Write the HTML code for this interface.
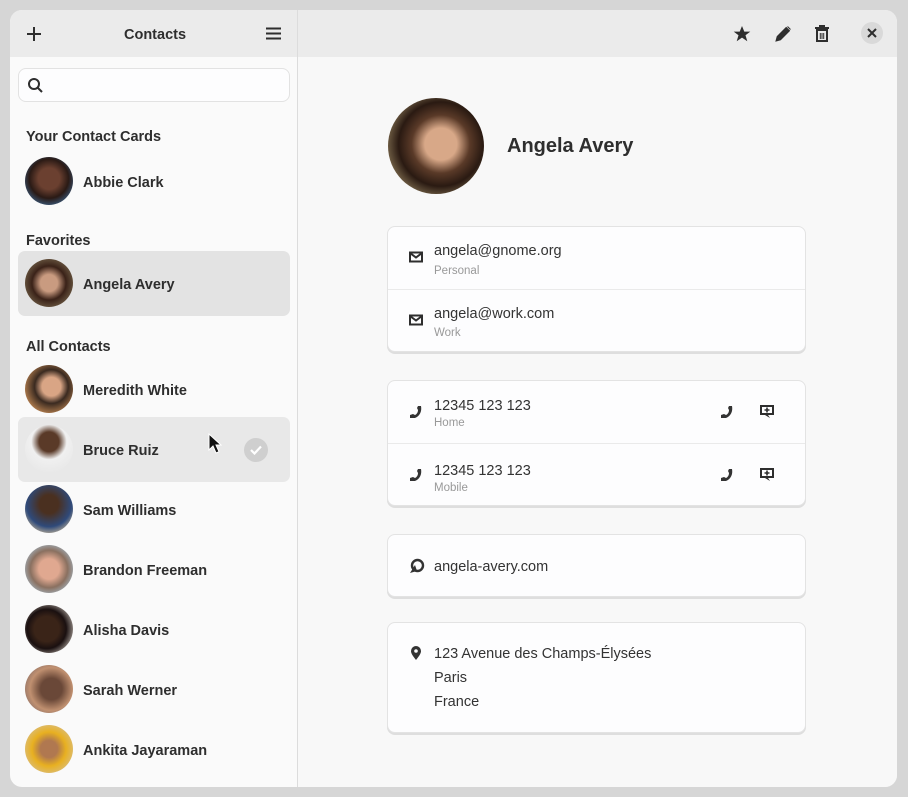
<!DOCTYPE html>
<html><head><style>
*{margin:0;padding:0;box-sizing:border-box}
body{width:908px;height:797px;background:#d6d6d6;font-family:"Liberation Sans",sans-serif;color:#2e2e2e;position:relative;overflow:hidden}
.win{position:absolute;left:10px;top:10px;width:887px;height:777px;border-radius:12px;background:#fafafa;overflow:hidden}
.hd{position:absolute;top:0;height:47px;background:#ebebeb}
.a{position:absolute}
.av{position:absolute;width:48px;height:48px;border-radius:50%;left:15px}
.nm{position:absolute;left:73px;font-weight:bold;font-size:14.5px;transform:translateY(-50%);margin-top:2px}
.sec{position:absolute;left:16px;font-weight:bold;font-size:14.5px;transform:translateY(-50%);margin-top:2px}
.card{position:absolute;left:377px;width:419px;background:#fdfdfe;border:1px solid #e3e3e3;border-radius:8px;box-shadow:0 2px 0 #dedede}
.t{position:absolute;left:46px;font-size:14.5px;color:#333;margin-top:2px}
.s{position:absolute;left:46px;font-size:11.5px;color:#999;margin-top:1px}
.ic{position:absolute;left:21px}
</style></head><body>
<div class="win">
<div class="hd" style="left:0;width:287px"></div>
<div class="hd" style="left:288px;width:599px"></div>
<div class="a" style="left:287px;top:0;width:1px;height:777px;background:#dcdcdc"></div>
<div class="a" style="left:288px;top:47px;width:599px;height:730px;background:#f8f8f8"></div>
<svg class="a" style="left:16px;top:16px" width="16" height="16"><path d="M8 1v14M1 8h14" stroke="#2e2e2e" stroke-width="2"/></svg>
<div class="a" style="left:114px;top:17px;font-weight:bold;font-size:14.5px">Contacts</div>
<svg class="a" style="left:256px;top:17px" width="15" height="13"><path d="M0 1.5h15M0 6.5h15M0 11.5h15" stroke="#2e2e2e" stroke-width="2"/></svg>
<svg class="a" style="left:723px;top:15px" width="18" height="18"><path d="M9 1l2.3 5.6h6l-4.8 3.6 1.8 6L9 12.6 3.7 16.2l1.8-6L.7 6.6h6z" fill="#2e2e2e"/></svg>
<svg class="a" style="left:764px;top:15px" width="18" height="18"><path d="M2 16l1.2-4.5 9-9 3.3 3.3-9 9z M13.5 1.5l3 3" fill="#2e2e2e" stroke="#2e2e2e" stroke-width="1"/></svg>
<svg class="a" style="left:804px;top:14px" width="16" height="19"><path d="M5 1h6v2h4v2H1V3h4z" fill="#2e2e2e"/><rect x="3" y="6" width="10" height="11" fill="none" stroke="#2e2e2e" stroke-width="2"/><path d="M6.3 9v6M8 9v6M9.7 9v6" stroke="#2e2e2e" stroke-width="1"/></svg>
<div class="a" style="left:851px;top:12px;width:22px;height:22px;border-radius:50%;background:#d9d9d9"></div>
<svg class="a" style="left:857px;top:18px" width="10" height="10"><path d="M1 1l8 8M9 1l-8 8" stroke="#2e2e2e" stroke-width="2"/></svg>
<div class="a" style="left:8px;top:58px;width:272px;height:34px;border:1px solid #e2e2e2;border-radius:8px;background:#fdfdfe"></div>
<svg class="a" style="left:17px;top:67px" width="17" height="17"><circle cx="7" cy="7" r="5" stroke="#2e2e2e" stroke-width="2" fill="none"/><path d="M11 11l4 4" stroke="#2e2e2e" stroke-width="2"/></svg>
<div class="sec" style="top:125px">Your Contact Cards</div>
<div class="av" style="top:147px;background:radial-gradient(circle at 50% 45%,#6b4030 30%,#2a1a15 55%,#3a5c80 80%)"></div>
<div class="nm" style="top:171px">Abbie Clark</div>
<div class="sec" style="top:229px">Favorites</div>
<div class="a" style="left:8px;top:241px;width:272px;height:65px;border-radius:7px;background:#e3e3e3"></div>
<div class="av" style="top:249px;background:radial-gradient(circle at 50% 50%,#c99b80 25%,#3a2218 50%,#7a6a50 85%)"></div>
<div class="nm" style="top:273px">Angela Avery</div>
<div class="sec" style="top:335px">All Contacts</div>
<div class="av" style="top:355px;background:radial-gradient(circle at 55% 45%,#d9a585 25%,#3a2a20 45%,#c58a55 80%)"></div>
<div class="nm" style="top:379px">Meredith White</div>
<div class="a" style="left:8px;top:407px;width:272px;height:65px;border-radius:7px;background:#e8e8e8"></div>
<div class="av" style="top:415px;background:radial-gradient(circle at 50% 35%,#5a3a28 25%,#f0f0f0 45%,#e8e8e8 80%)"></div>
<div class="nm" style="top:439px">Bruce Ruiz</div>
<div class="a" style="left:234px;top:428px;width:24px;height:24px;border-radius:50%;background:#cfcfcf"></div>
<svg class="a" style="left:240px;top:435px" width="12" height="10"><path d="M1 5l3.5 3.5L11 1.5" stroke="#fff" stroke-width="2.2" fill="none"/></svg>
<svg class="a" style="left:198px;top:423px" width="14" height="22"><path d="M1 1v16l4-4 3 7 3-1.3-3-6.7h5z" fill="#111" stroke="#fff" stroke-width="1"/></svg>
<div class="av" style="top:475px;background:radial-gradient(circle at 50% 40%,#4a3020 25%,#2f4a7a 60%,#c8b89a 85%)"></div>
<div class="nm" style="top:499px">Sam Williams</div>
<div class="av" style="top:535px;background:radial-gradient(circle at 50% 50%,#e0a890 30%,#8a7060 55%,#a8c0d0 85%)"></div>
<div class="nm" style="top:559px">Brandon Freeman</div>
<div class="av" style="top:595px;background:radial-gradient(circle at 45% 50%,#3a2418 35%,#1a1010 55%,#c0b8b0 85%)"></div>
<div class="nm" style="top:619px">Alisha Davis</div>
<div class="av" style="top:655px;background:radial-gradient(circle at 55% 50%,#6a4838 30%,#c09070 60%,#8a7068 85%)"></div>
<div class="nm" style="top:679px">Sarah Werner</div>
<div class="av" style="top:715px;background:radial-gradient(circle at 50% 50%,#b07850 25%,#e8b020 50%,#d8c090 85%)"></div>
<div class="nm" style="top:739px">Ankita Jayaraman</div>
<div class="a" style="left:378px;top:88px;width:96px;height:96px;border-radius:50%;background:radial-gradient(circle at 55% 48%,#d8a888 22%,#5a3a28 40%,#2a1a12 58%,#8a7858 80%)"></div>
<div class="a" style="left:497px;top:125px;font-weight:bold;font-size:20px">Angela Avery</div>
<div class="card" style="top:216px;height:126px">
<div class="a" style="left:0;top:62px;width:100%;height:1px;background:#eaeaea"></div>
<svg class="ic" style="top:24px" width="14" height="12"><rect x="1" y="1.5" width="12" height="9" fill="none" stroke="#2e2e2e" stroke-width="2"/><path d="M1 2l6 4.5L13 2" stroke="#2e2e2e" stroke-width="2" fill="none"/></svg>
<div class="t" style="top:14px">angela@gnome.org</div><div class="s" style="top:37px">Personal</div>
<svg class="ic" style="top:87px" width="14" height="12"><rect x="1" y="1.5" width="12" height="9" fill="none" stroke="#2e2e2e" stroke-width="2"/><path d="M1 2l6 4.5L13 2" stroke="#2e2e2e" stroke-width="2" fill="none"/></svg>
<div class="t" style="top:77px">angela@work.com</div><div class="s" style="top:99px">Work</div>
</div>
<div class="card" style="top:370px;height:126px">
<div class="a" style="left:0;top:62px;width:100%;height:1px;background:#eaeaea"></div>
<svg class="ic" style="top:24px" width="14" height="14"><path d="M9 1h3c1 5-1 10-6 12H1v-3l3-1 2 1c2-1 3-3 3-5L8 3z" fill="#333"/></svg>
<div class="t" style="top:15px">12345 123 123</div><div class="s" style="top:35px">Home</div>
<svg class="a" style="left:332px;top:24px" width="14" height="14"><path d="M9 1h3c1 5-1 10-6 12H1v-3l3-1 2 1c2-1 3-3 3-5L8 3z" fill="#333"/></svg>
<svg class="a" style="left:371px;top:23px" width="16" height="16"><path d="M1 1h14v10H9l2 3-5-3H1z" fill="#2e2e2e"/><rect x="3" y="3" width="10" height="6" fill="#fdfdfe"/><path d="M8 3.5v5M5.5 6h5" stroke="#2e2e2e" stroke-width="1.6"/></svg>
<div class="t" style="top:80px">12345 123 123</div><div class="s" style="top:100px">Mobile</div>
<svg class="ic" style="top:87px" width="14" height="14"><path d="M9 1h3c1 5-1 10-6 12H1v-3l3-1 2 1c2-1 3-3 3-5L8 3z" fill="#333"/></svg>
<svg class="a" style="left:332px;top:87px" width="14" height="14"><path d="M9 1h3c1 5-1 10-6 12H1v-3l3-1 2 1c2-1 3-3 3-5L8 3z" fill="#333"/></svg>
<svg class="a" style="left:371px;top:86px" width="16" height="16"><path d="M1 1h14v10H9l2 3-5-3H1z" fill="#2e2e2e"/><rect x="3" y="3" width="10" height="6" fill="#fdfdfe"/><path d="M8 3.5v5M5.5 6h5" stroke="#2e2e2e" stroke-width="1.6"/></svg>
</div>
<div class="card" style="top:524px;height:63px">
<svg class="ic" style="top:23px" width="16" height="16"><circle cx="8.5" cy="7.5" r="5.5" fill="none" stroke="#333" stroke-width="2.4"/><path d="M1 15l5-8 2 6z" fill="#333"/></svg>
<div class="t" style="top:22px">angela-avery.com</div>
</div>
<div class="card" style="top:612px;height:111px">
<svg class="ic" style="top:22px" width="14" height="16"><path d="M7 15C3 10 2 8 2 6a5 5 0 0110 0c0 2-1 4-5 9z" fill="#333"/><circle cx="7" cy="6" r="1.8" fill="#fdfdfe"/></svg>
<div class="t" style="top:21px">123 Avenue des Champs-Élysées</div>
<div class="t" style="top:45px">Paris</div>
<div class="t" style="top:69px">France</div>
</div>
</div>
</body></html>
